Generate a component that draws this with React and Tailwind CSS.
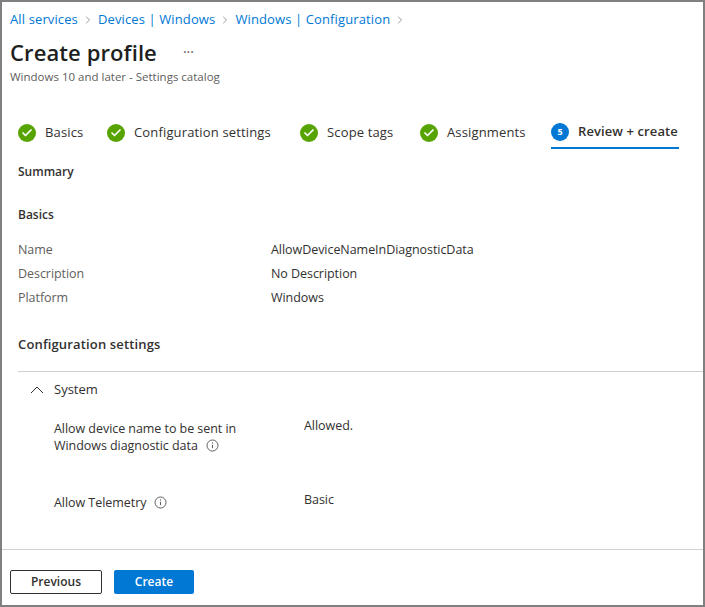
import { Check, ChevronRight } from "lucide-react";

const font = { fontFamily: "'Open Sans', sans-serif" };

function Crumb({ children }) {
  return (
    <>
      <span className="text-[#0078d4]">{children}</span>
      <ChevronRight className="w-3 h-3 text-[#605e5c] mx-1" strokeWidth={1.25} />
    </>
  );
}

function Step({ label, width }) {
  return (
    <div className={`flex items-center pt-[2px] ${width}`}>
      <span className="w-[18px] h-[18px] rounded-full bg-[#57a300] flex items-center justify-center mr-[9px]">
        <Check className="w-3 h-3 text-white" strokeWidth={3.5} />
      </span>
      <span className="text-[13px] tracking-[0.15px] text-[#323130]">{label}</span>
    </div>
  );
}

function InfoIcon() {
  return (
    <svg className="inline-block ml-2 align-[-2px]" width="13" height="13" viewBox="0 0 13 13" fill="none">
      <circle cx="6.5" cy="6.5" r="5.5" stroke="#605e5c" />
      <path d="M6.5 5.8v3.4" stroke="#605e5c" />
      <circle cx="6.5" cy="4" r="0.7" fill="#605e5c" />
    </svg>
  );
}

function Row({ label, value }) {
  return (
    <div className="flex h-6 items-center text-[12.5px] tracking-[-0.05px]">
      <div className="w-[253px] text-[#605e5c]">{label}</div>
      <div className="text-[#323130]">{value}</div>
    </div>
  );
}

export default function App() {
  return (
    <div
      style={font}
      className="w-[705px] h-[607px] bg-white border-2 border-[#808080] flex flex-col overflow-hidden"
    >
      <div className="flex-1 min-h-0">
        {/* Header */}
        <div className="pl-2 pt-2">
          <div className="flex items-center h-5 text-[13px] tracking-[0.12px]">
            <Crumb>All services</Crumb>
            <Crumb>Devices | Windows</Crumb>
            <Crumb>Windows | Configuration</Crumb>
          </div>
          <div className="flex items-center h-8 mt-[6px]">
            <h1 className="text-[22px] font-semibold tracking-[0.1px] text-[#201f1e]">Create profile</h1>
            <span className="ml-[26px] text-[14px] leading-none text-[#605e5c]">···</span>
          </div>
          <div className="text-[11.5px] leading-4 mt-px text-[#605e5c]">Windows 10 and later - Settings catalog</div>
        </div>

        {/* Steps */}
        <div className="flex items-center h-[34px] mt-[30px] pl-4">
          <Step label="Basics" width="w-[89px]" />
          <Step label="Configuration settings" width="w-[193px]" />
          <Step label="Scope tags" width="w-[120px]" />
          <Step label="Assignments" width="w-[131px]" />
          <div className="flex items-center h-full pt-[2px] border-b-2 border-[#0078d4] w-[128px]">
            <span className="w-[18px] h-[18px] rounded-full bg-[#0078d4] flex items-center justify-center mr-[9px] text-white text-[9px] font-bold">5</span>
            <span className="text-[13px] font-semibold tracking-[0.1px] whitespace-nowrap text-[#323130]">Review + create</span>
          </div>
        </div>

        {/* Summary */}
        <div className="pl-4">
          <div className="mt-[13px] h-5 flex items-center text-[12px] font-semibold text-[#323130]">Summary</div>
          <div className="mt-[23px] h-5 flex items-center text-[12px] font-semibold text-[#323130]">Basics</div>
          <div className="mt-[13px]">
            <Row label="Name" value="AllowDeviceNameInDiagnosticData" />
            <Row label="Description" value="No Description" />
            <Row label="Platform" value="Windows" />
          </div>
          <div className="mt-[25px] h-5 flex items-center text-[13px] font-semibold tracking-[0.15px] text-[#323130]">Configuration settings</div>
          <div className="mt-4 border-t border-[#d2d0ce]">
            <div className="flex items-center h-[35px] pl-3">
              <svg width="14" height="8" viewBox="0 0 14 8" fill="none">
                <path d="M1 7l6-6 6 6" stroke="#323130" />
              </svg>
              <span className="ml-[10px] text-[13px] text-[#323130]">System</span>
            </div>
            <div className="flex pl-9 mt-[10px] text-[12.5px] tracking-[-0.05px] text-[#323130]">
              <div className="w-[250px] leading-[17px] pt-[3px]">
                Allow device name to be sent in
                <br />
                Windows diagnostic data
                <InfoIcon />
              </div>
              <div className="leading-[17px]">Allowed.</div>
            </div>
            <div className="flex pl-9 mt-[37px] text-[12.5px] tracking-[-0.05px] text-[#323130]">
              <div className="w-[250px] leading-[17px] pt-[3px]">
                Allow Telemetry
                <InfoIcon />
              </div>
              <div className="leading-[17px]">Basic</div>
            </div>
          </div>
        </div>
      </div>

      {/* Footer */}
      <div className="h-[56px] border-t border-[#d2d0ce] flex items-start pt-5 pl-2 gap-3 shrink-0">
        <button className="w-[92px] h-6 rounded-[2px] border border-[#323130] text-[12px] font-semibold text-[#323130]">Previous</button>
        <button className="w-20 h-6 rounded-[2px] bg-[#0078d4] text-[12px] font-semibold text-white">Create</button>
      </div>
    </div>
  );
}
